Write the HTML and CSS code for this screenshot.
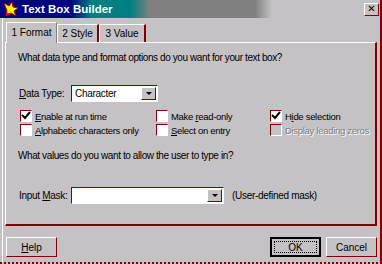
FILE: index.html
```html
<!DOCTYPE html>
<html lang="en">
<head>
  <meta charset="UTF-8" />
  <title>Text Box Builder</title>
  <link rel="stylesheet" href="styles.css">
</head>
<body>
  <div class="window">
    <div class="titlebar">
      <svg class="app-icon" width="16" height="16" viewBox="0 0 16 16">
        <polygon points="1,2 6,5 9,1 10,6 15,7 11,10 13,15 8,12 3,15 4,10" fill="#ffff00" stroke="#c00000" stroke-width="1"/>
        <polygon points="3,12 8,12 3,15" fill="#ff0000"/>
      </svg>
      <span class="title">Text Box Builder</span>
      <button class="close">&#x2715;</button>
    </div>

    <div class="content">
      <div class="tabs">
        <div class="tab active">1 Format</div>
        <div class="tab">2 Style</div>
        <div class="tab">3 Value</div>
      </div>

      <div class="panel">
        <p class="question">What data type and format options do you want for your text box?</p>

        <div class="field-row type-row">
          <label><u>D</u>ata Type:</label>
          <div class="combo type-combo">
            <span class="combo-text">Character</span>
            <span class="combo-btn"><i class="arrow"></i></span>
          </div>
        </div>

        <div class="checks">
          <div class="check"><span class="box checked"></span><span><u>E</u>nable at run time</span></div>
          <div class="check"><span class="box"></span><span>Make <u>r</u>ead-only</span></div>
          <div class="check"><span class="box checked"></span><span>H<u>i</u>de selection</span></div>
          <div class="check"><span class="box"></span><span><u>A</u>lphabetic characters only</span></div>
          <div class="check"><span class="box"></span><span><u>S</u>elect on entry</span></div>
          <div class="check disabled"><span class="box"></span><span>Display leading zeros</span></div>
        </div>

        <p class="question second">What values do you want to allow the user to type in?</p>

        <div class="field-row mask-row">
          <label>Input <u>M</u>ask:</label>
          <div class="combo mask-combo">
            <span class="combo-text"></span>
            <span class="combo-btn"><i class="arrow"></i></span>
          </div>
          <span class="hint">(User-defined mask)</span>
        </div>
      </div>

      <div class="buttons">
        <button class="btn"><u>H</u>elp</button>
        <span class="spacer"></span>
        <button class="btn default"><span class="focus">OK</span></button>
        <button class="btn">Cancel</button>
      </div>
    </div>
  </div>
</body>
</html>
```

FILE: styles.css
```css
body {
  margin: 0;
  width: 382px;
  height: 264px;
  overflow: hidden;
  background: #c4c2c4;
  font-family: 'Liberation Sans', Arial, sans-serif;
  font-size: 10px;
  letter-spacing: -0.3px;
  color: #000;
  white-space: nowrap;
}

.window {
  height: 264px;
  box-sizing: border-box;
  border-right: 2px solid #800000;
  border-bottom: 2px dotted #800000;
}

.titlebar {
  height: 18px;
  display: flex;
  align-items: center;
  background: linear-gradient(to right, #000080 0, #000080 70px, #008080 92px, #008080 130px, #808080 150px, #808080 255px, #c4c2c4 272px);
}

.app-icon {
  margin: 0 3px 0 3px;
}

.title {
  color: #fff;
  font-weight: bold;
  font-size: 11.5px;
  letter-spacing: 0;
}

.close {
  margin-left: auto;
  margin-right: 1px;
  width: 15px;
  height: 13px;
  padding: 0;
  background: #c4c2c4;
  border: 1px solid;
  border-color: #fff #800000 #800000 #fff;
  font-size: 10px;
  font-weight: bold;
  line-height: 10px;
  font-family: 'DejaVu Sans', sans-serif;
}

.content {
  margin-left: 2px;
  border-left: 1px solid #fff;
  padding: 3px 3px 0 2px;
  height: 241px;
}

.tabs {
  display: flex;
  align-items: flex-end;
  height: 21px;
  padding-left: 1px;
  position: relative;
  z-index: 1;
}

.tab {
  height: 17px;
  line-height: 17px;
  width: 39px;
  text-align: center;
  border-top: 1px solid #fff;
  border-left: 1px solid #fff;
  border-right: 2px solid #800000;
  letter-spacing: 0;
}

.tab:last-child {
  width: 44px;
}

.tab.active {
  width: 49px;
  height: 20px;
  line-height: 20px;
  margin-bottom: -1px;
  background: #c4c2c4;
  border-right: 1px solid #808080;
}

.panel {
  height: 181px;
  border-top: 1px solid #fff;
  border-left: 1px solid #fff;
  border-right: 2px solid #800000;
  border-bottom: 2px solid #800000;
  padding: 0 0 0 12px;
}

.question {
  margin: 9px 0 0 0;
  letter-spacing: -0.4px;
}

.question.second {
  margin-top: 14px;
}

.field-row {
  display: flex;
  align-items: center;
}

.type-row {
  margin-top: 22px;
}

.mask-row {
  margin-top: 26px;
}

.field-row label {
  width: 52px;
  padding-left: 1px;
}

.combo {
  height: 17px;
  box-sizing: border-box;
  background: #fff;
  border: 1px solid;
  border-color: #800000 #fff #fff #800000;
  display: flex;
  align-items: center;
}

.type-combo {
  width: 87px;
}

.mask-combo {
  width: 153px;
}

.combo-text {
  flex: 1;
  padding-left: 3px;
}

.combo-btn {
  width: 15px;
  height: 13px;
  margin-right: 1px;
  box-sizing: border-box;
  background: #c4c2c4;
  border: 1px solid;
  border-color: #fff #800000 #800000 #fff;
  display: flex;
  align-items: center;
  justify-content: center;
}

.arrow {
  width: 0;
  height: 0;
  border-left: 3px solid transparent;
  border-right: 3px solid transparent;
  border-top: 3px solid #000;
}

.hint {
  margin-left: 8px;
}

.checks {
  display: grid;
  grid-template-columns: 136px 114px auto;
  row-gap: 2px;
  margin-top: 8px;
  padding-left: 2px;
  font-size: 9.5px;
}

.check {
  display: flex;
  align-items: center;
  height: 12px;
}

.box {
  width: 12px;
  height: 12px;
  box-sizing: border-box;
  background: #fff;
  border: 1px solid;
  border-color: #800000 #fff #fff #800000;
  margin-right: 3px;
}

.box.checked {
  background: #fff url("data:image/svg+xml;utf8,<svg xmlns='http://www.w3.org/2000/svg' width='10' height='10'><path d='M1 4 L4 7 L9 1' fill='none' stroke='black' stroke-width='2'/></svg>") no-repeat center;
}

.check.disabled {
  color: #808080;
  text-shadow: 1px 1px 0 #fff;
}

.check.disabled .box {
  background: #c4c2c4;
}

.buttons {
  display: flex;
  gap: 5px;
  margin-top: 11px;
  padding-left: 1px;
}

.spacer {
  flex: 1;
}

.btn {
  width: 51px;
  height: 20px;
  padding: 0;
  background: #c4c2c4;
  border: 1px solid;
  border-color: #fff #800000 #800000 #fff;
  font-family: 'Liberation Sans', Arial, sans-serif;
  font-size: 10px;
}

.btn.default {
  border: 2px solid #000;
  padding: 2px;
}

.focus {
  display: block;
  height: 100%;
  box-sizing: border-box;
  border: 1px dotted #000;
  line-height: 12px;
}
```
